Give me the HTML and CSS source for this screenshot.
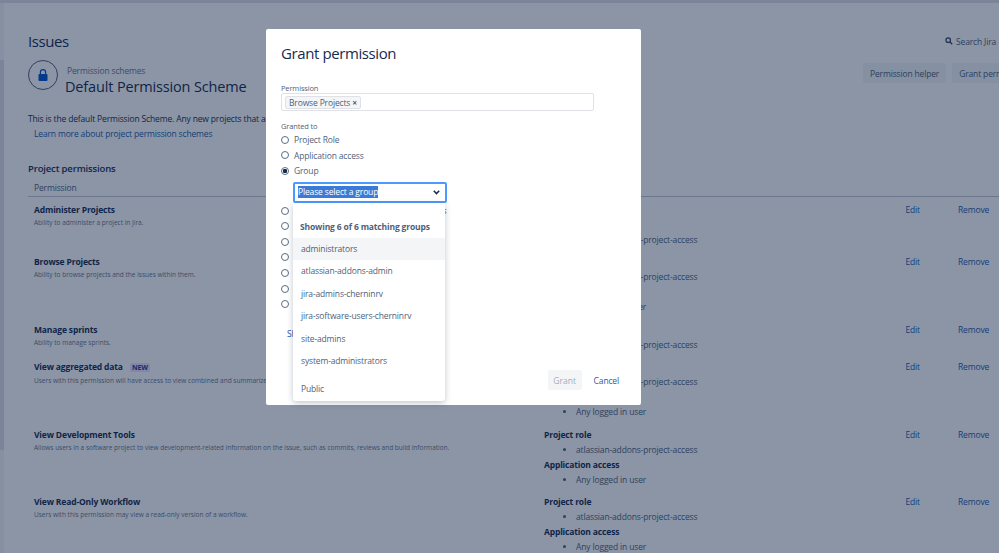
FILE: index.html
```html
<!DOCTYPE html>
<html>
<head>
  <title>Default Permission Scheme</title>
  <meta charset="UTF-8" />
  <link rel="stylesheet" href="styles.css">
</head>
<body>
  <div class="topbar"></div>
  <div class="app">
    <div class="rail"><div class="rail-thumb"></div></div>
    <div class="page">
      <div class="page-top">
        <h1>Issues</h1>
        <div class="search">
          <svg width="8" height="8" viewBox="0 0 10 10"><circle cx="4" cy="4" r="2.8" fill="none" stroke="#344563" stroke-width="1.5"/><path d="M6 6l3 3" stroke="#344563" stroke-width="1.7"/></svg>
          <span>Search Jira</span>
        </div>
      </div>
      <div class="scheme-head">
        <div class="lock">
          <svg width="10" height="12" viewBox="0 0 10 12"><path d="M2.4 5V3.2a2.6 2.6 0 0 1 5.2 0V5" fill="none" stroke="#0052cc" stroke-width="1.2"/><rect x="0.5" y="5" width="9" height="7" rx="1" fill="#0052cc"/></svg>
        </div>
        <div class="scheme-title">
          <div class="crumb">Permission schemes</div>
          <h2>Default Permission Scheme</h2>
        </div>
        <div class="head-actions">
          <button class="btn">Permission helper</button>
          <button class="btn">Grant permission</button>
        </div>
      </div>
      <p class="desc">This is the default Permission Scheme. Any new projects that are created will be assigned this scheme.</p>
      <a class="learn">Learn more about project permission schemes</a>
      <h3>Project permissions</h3>
      <div class="table-head">Permission</div>

      <div class="row">
        <div class="perm"><strong>Administer Projects</strong><small>Ability to administer a project in Jira.</small></div>
        <div class="grants">
          <strong>Project role</strong>
          <ul><li>administrators</li><li>atlassian-addons-project-access</li></ul>
        </div>
        <a>Edit</a><a>Remove</a>
      </div>
      <div class="row">
        <div class="perm"><strong>Browse Projects</strong><small>Ability to browse projects and the issues within them.</small></div>
        <div class="grants">
          <strong>Project role</strong>
          <ul><li>atlassian-addons-project-access</li></ul>
          <strong>Application access</strong>
          <ul><li>Any logged in user</li></ul>
        </div>
        <a>Edit</a><a>Remove</a>
      </div>
      <div class="row">
        <div class="perm"><strong>Manage sprints</strong><small>Ability to manage sprints.</small></div>
        <div class="grants">
          <strong>Project role</strong>
          <ul><li>atlassian-addons-project-access</li></ul>
        </div>
        <a>Edit</a><a>Remove</a>
      </div>
      <div class="row">
        <div class="perm"><strong>View aggregated data <span class="lozenge">NEW</span></strong><small>Users with this permission will have access to view combined and summarized data.</small></div>
        <div class="grants">
          <strong>Project role</strong>
          <ul><li>atlassian-addons-project-access</li></ul>
          <strong>Application access</strong>
          <ul><li>Any logged in user</li></ul>
        </div>
        <a>Edit</a><a>Remove</a>
      </div>
      <div class="row">
        <div class="perm"><strong>View Development Tools</strong><small>Allows users in a software project to view development-related information on the issue, such as commits, reviews and build information.</small></div>
        <div class="grants">
          <strong>Project role</strong>
          <ul><li>atlassian-addons-project-access</li></ul>
          <strong>Application access</strong>
          <ul><li>Any logged in user</li></ul>
        </div>
        <a>Edit</a><a>Remove</a>
      </div>
      <div class="row">
        <div class="perm"><strong>View Read-Only Workflow</strong><small>Users with this permission may view a read-only version of a workflow.</small></div>
        <div class="grants">
          <strong>Project role</strong>
          <ul><li>atlassian-addons-project-access</li></ul>
          <strong>Application access</strong>
          <ul><li>Any logged in user</li></ul>
        </div>
        <a>Edit</a><a>Remove</a>
      </div>
    </div>
  </div>

  <div class="blanket"></div>

  <div class="modal">
    <h4>Grant permission</h4>
    <label class="field-label">Permission</label>
    <div class="multi"><span class="tag">Browse Projects <b>×</b></span></div>
    <label class="field-label granted">Granted to</label>
    <div class="radio"><i></i>Project Role</div>
    <div class="radio"><i></i>Application access</div>
    <div class="radio"><i class="on"></i>Group</div>
    <div class="select-wrap">
      <div class="select">
        <span class="selected-text">Please select a group</span>
        <svg width="7" height="5" viewBox="0 0 7 5"><path d="M.8.8l2.7 2.8L6.2.8" fill="none" stroke="#172b4d" stroke-width="1.5"/></svg>
      </div>
      <div class="dropdown">
        <div class="dd-head">Showing 6 of 6 matching groups</div>
        <div class="dd-item active">administrators</div>
        <div class="dd-item">atlassian-addons-admin</div>
        <div class="dd-item">jira-admins-cherninrv</div>
        <div class="dd-item">jira-software-users-cherninrv</div>
        <div class="dd-item">site-admins</div>
        <div class="dd-item">system-administrators</div>
        <div class="dd-item public">Public</div>
      </div>
    </div>
    <div class="radio"><i></i>Service Project Customer - Portal Access</div>
    <div class="radio"><i></i>Project lead</div>
    <div class="radio"><i></i>Current assignee</div>
    <div class="radio"><i></i>Reporter</div>
    <div class="radio"><i></i>User custom field value</div>
    <div class="radio"><i></i>Group custom field value</div>
    <div class="radio"><i></i>Single user</div>
    <a class="show-more">Show more</a>
    <div class="modal-foot">
      <button class="grant" disabled>Grant</button>
      <a class="cancel">Cancel</a>
    </div>
  </div>
</body>
</html>
```

FILE: styles.css
```css
:root {
  --ink: #172b4d;
  --ink-soft: #505f79;
  --subtle: #6b778c;
  --link: #1f5aa8;
}
* {
  box-sizing: border-box;
}
html, body {
  height: 553px;
}
body {
  margin: 0;
  background: #fff;
  color: var(--ink);
  font-family: "Open Sans", "Noto Sans", sans-serif;
  font-size: 8.5px;
  letter-spacing: -0.15px;
  line-height: 15px;
  overflow: hidden;
}
a {
  color: var(--link);
}
.topbar {
  height: 3px;
  background: #dfe1e6;
}
.app {
  display: flex;
}
.rail {
  width: 4px;
  flex: none;
  background: #f4f5f7;
}
.rail-thumb {
  height: 390px;
  margin-top: 57px;
  background: #dfe1e6;
}
.page {
  flex: 1;
  min-width: 0;
  padding: 27px 0 0 24px;
}
.page-top {
  display: flex;
  justify-content: space-between;
  align-items: center;
  height: 22px;
}
h1 {
  margin: 0;
  font-size: 15px;
  font-weight: 500;
  letter-spacing: -0.4px;
}
.search {
  display: flex;
  align-items: center;
  gap: 3px;
  width: 54px;
  color: var(--ink-soft);
  white-space: nowrap;
}
.scheme-head {
  display: flex;
  margin-top: 8px;
  height: 30px;
}
.lock {
  width: 30px;
  height: 30px;
  flex: none;
  border: 1px solid var(--ink-soft);
  border-radius: 50%;
  display: flex;
  align-items: center;
  justify-content: center;
}
.scheme-title {
  flex: none;
  width: 798px;
  margin-left: 7px;
  padding-top: 5px;
}
.crumb {
  color: var(--subtle);
  margin-left: 2px;
  line-height: 12px;
}
h2 {
  margin: 0;
  font-size: 14.5px;
  font-weight: 500;
  letter-spacing: -0.15px;
  line-height: 20px;
}
.head-actions {
  display: flex;
  gap: 6px;
  margin-top: 3px;
  flex: none;
}
.btn {
  height: 20px;
  padding: 0 7px;
  border: 0;
  border-radius: 2px;
  background: #f4f5f7;
  color: var(--ink-soft);
  font: inherit;
  letter-spacing: inherit;
}
.desc {
  margin: 21px 0 0;
  white-space: nowrap;
}
.learn {
  display: block;
  margin: 0 0 0 6px;
}
h3 {
  margin: 20px 0 0;
  font-size: 9.5px;
  font-weight: 600;
  line-height: 15px;
}
.table-head {
  padding: 4px 0 0 6px;
  height: 20.5px;
  color: var(--ink-soft);
  border-bottom: 1px solid #c1c7d0;
}
.row {
  display: grid;
  grid-template-columns: 510px 361.5px 52.5px auto;
  padding: 5px 0 0 6px;
  margin-bottom: 2.5px;
}
.perm strong, .grants strong {
  display: block;
  font-weight: 700;
}
.perm small {
  display: block;
  margin-top: 1px;
  font-size: 6.5px;
  letter-spacing: 0;
  line-height: 10px;
  color: var(--subtle);
  white-space: nowrap;
}
.grants ul {
  margin: 0;
  padding: 0 0 0 32px;
  color: var(--ink-soft);
}
.lozenge {
  margin-left: 5px;
  padding: 0 2px;
  font-size: 7px;
  color: #403294;
  background: #eae6ff;
  border-radius: 2px;
}
.blanket {
  position: absolute;
  inset: 0;
  background: rgba(9, 30, 66, 0.47);
}
.modal {
  position: absolute;
  left: 266px;
  top: 29px;
  width: 375px;
  height: 376px;
  padding: 14px 15px;
  background: #fff;
  border-radius: 2px;
}
h4 {
  margin: 0 0 20px;
  font-size: 15px;
  font-weight: 500;
  letter-spacing: -0.4px;
  line-height: 21px;
}
.field-label {
  display: block;
  font-size: 7.5px;
  line-height: 9px;
  color: var(--ink-soft);
}
.multi {
  width: 313px;
  height: 18px;
  padding: 1px 3px;
  border: 1px solid #dfe1e6;
  border-radius: 2px;
}
.tag {
  display: inline-block;
  height: 13px;
  padding: 0 3px;
  background: #f4f5f7;
  border: 1px solid #dfe1e6;
  border-radius: 2px;
  line-height: 11px;
  color: var(--ink-soft);
}
.tag b {
  font-weight: 700;
}
.granted {
  margin: 11px 0 1px;
}
.radio {
  display: flex;
  align-items: center;
  height: 15.6px;
  color: var(--ink-soft);
  white-space: nowrap;
}
.radio i {
  width: 8px;
  height: 8px;
  margin-right: 5px;
  border: 1px solid #5e6c84;
  border-radius: 50%;
  background: #fff;
}
.radio i.on {
  background: radial-gradient(circle, var(--ink) 0 2px, #fff 2.4px);
}
.select-wrap {
  position: relative;
  height: 21px;
  margin: 3px 0 0 12px;
}
.select {
  display: flex;
  align-items: center;
  justify-content: space-between;
  width: 154px;
  height: 21px;
  padding: 0 5px 0 3px;
  border: 2px solid #4c9aff;
  border-radius: 2px;
  background: #fff;
}
.selected-text {
  background: #3a7bd8;
  color: #fff;
  line-height: 12px;
}
.dropdown {
  position: absolute;
  z-index: 1;
  top: 21px;
  left: 0;
  width: 152px;
  height: 198px;
  background: #fff;
  border-radius: 0 0 3px 3px;
  box-shadow: 0 2px 6px rgba(9, 30, 66, 0.25);
}
.dd-head {
  padding: 16px 0 0 7px;
  height: 35px;
  font-weight: 700;
  color: var(--ink-soft);
}
.dd-item {
  height: 22.5px;
  line-height: 22px;
  padding-left: 8px;
  color: var(--ink-soft);
}
.dd-item.active {
  background: #f4f5f7;
}
.dd-item.public {
  margin-top: 5px;
}
.show-more {
  display: block;
  margin: 14px 0 0 6px;
}
.modal-foot {
  position: absolute;
  right: 22px;
  bottom: 15px;
  display: flex;
  align-items: center;
  gap: 12px;
}
.grant {
  width: 34px;
  height: 20px;
  padding: 0;
  border: 0;
  border-radius: 2px;
  background: #f4f5f7;
  color: #a5adba;
  font: inherit;
}
```
